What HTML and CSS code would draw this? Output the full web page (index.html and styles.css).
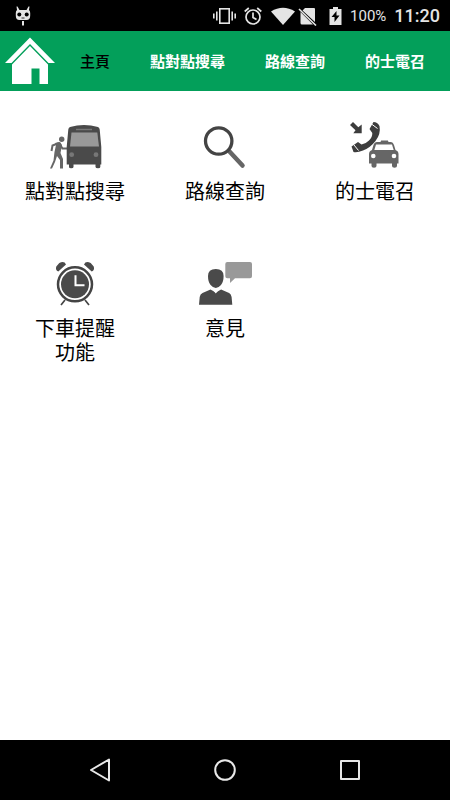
FILE: index.html
```html
<!DOCTYPE html>
<html lang="zh-Hant">
<head>
<meta charset="utf-8">
<meta name="viewport" content="width=device-width, initial-scale=1">
<title>主頁</title>
<link rel="stylesheet" href="styles.css">
</head>
<body>
<div class="status">
  <svg class="status-cat" width="16" height="20" viewBox="0 0 16 20" fill="#e4e4e4"><path d="M1.500.5h1L4.500 4h7l2-3.500h1L14 4q1.200 1 1.200 3v2.500q0 4.500-3.700 4.500h-7Q.8 14 .8 9.500V7q0-2 1.200-3z"/><circle cx="4.300" cy="8.500" r="2" fill="#000"/><circle cx="11.700" cy="8.500" r="2" fill="#000"/><path d="M6.500 12h3" stroke="#000" stroke-width=".8"/><path d="M7 15h2v4.500H7z"/></svg>
  <div class="status-right">
    <svg width="23" height="18" viewBox="0 0 23 18" fill="none" stroke="#e4e4e4" stroke-width="1.600"><rect x="6.800" y="1.800" width="9.400" height="14.400"/><path d="M3.800 4.500v9M.8 6.500v5M19.200 4.500v9M22.200 6.500v5"/></svg>
    <svg width="18" height="18" viewBox="0 0 18 18" fill="none" stroke="#e4e4e4" stroke-width="1.700"><circle cx="9" cy="10" r="7"/><path d="M9 5.500v5l3.500 2M.7 4.500 4.800 1M17.300 4.500 13.200 1"/></svg>
    <svg width="48" height="20" viewBox="0 0 48 20" fill="#e4e4e4"><path d="M1 5.500Q13-2 25 5.500L13 19z"/><path d="M35 2h9q1 0 1 1v13L32.500 4.500zM30.500 6 43 18.500H32q-1.500 0-1.500-1.500z"/><path d="m29 3 17 16.500" stroke="#e4e4e4" stroke-width="1.600"/></svg>
    <svg width="16" height="18" viewBox="0 0 16 18" fill="#e4e4e4"><path d="M7 0h5v2h3.500v16h-12V2H7z"/><path d="M10.500 4 5.500 10h3v5l5-6.500h-3z" fill="#000"/></svg>
    <span class="percent">100%</span>
    <span class="time">11:20</span>
  </div>
</div>
<header class="bar">
  <a class="home" href="#" aria-label="主頁"><svg width="50" height="48" viewBox="0 0 50 48" fill="#fff"><path d="M25 0.500 0 26h6.500L25 7l18.500 19H50z"/><path d="M25 9 7 27.500V47h19.500V31.500h8V47H43V27.500z"/></svg></a>
  <nav class="tabs">
    <a class="tab tab-current" href="#">主頁</a>
    <a class="tab" href="#">點對點搜尋</a>
    <a class="tab" href="#">路線查詢</a>
    <a class="tab" href="#">的士電召</a>
  </nav>
</header>
<main class="menu">
  <a class="item" href="#">
    <svg class="icon" viewBox="0 0 60 60"><circle cx="16.700" cy="24.300" r="2.700" fill="#666"/><path d="m14 28-6.500 2.500L6.500 36M14 28l3.500 5.500h5" fill="none" stroke="#666" stroke-width="2"/><path d="m10 28 5-1 2 3-1.500 8 2.500 6v9.500h-3V45l-3-4-2 6-3 6.500H5l3.500-8L9.500 37l1.500-7z" fill="#666"/><path d="M25 12q14-4 28 0 1.500.5 1.700 2.500L56.300 32v17.500h-1V52q0 1.300-2.300 1.300T50.500 52v-2.500h-22V52q0 1.300-2.300 1.300T24 52v-2.500h-2.300V32l1.600-17.500Q23.500 12.500 25 12z" fill="#4a4a4a"/><path d="M26.500 17.500h25.800L54 31.500H25z" fill="#999"/><path d="M31 14.500h16" stroke="#777" stroke-width="1.500"/><circle cx="26.700" cy="39.700" r="2.400" fill="#777"/><circle cx="51" cy="39.700" r="2.400" fill="#777"/></svg>
    <span class="label">點對點搜尋</span>
  </a>
  <a class="item" href="#">
    <svg class="icon" viewBox="0 0 60 60" fill="none"><path d="m34.500 36.500 13 14" stroke="#666" stroke-width="4.500" stroke-linecap="round"/><circle cx="23.700" cy="26" r="13.200" stroke="#444" stroke-width="3.300"/></svg>
    <span class="label">路線查詢</span>
  </a>
  <a class="item" href="#">
    <svg class="icon" viewBox="0 0 60 60"><path d="M8 7l5.300 5.300 3.400-2.800v8.800H8.300l2.200-3L5 10z" fill="#3d3d3d"/><path d="M28.500 7q4 0 6 4 1.500 8-4 15T18 35.500q-6 2.500-9.500 1.500L6.500 31.500l6.500-4.500 3.500 2.500q4-.5 7.500-4t3.300-7.500L24.500 14z" fill="#3d3d3d"/><path d="m26.500 9 6 4.500M9 30l4.500 5.500" stroke="#fff" stroke-width="1"/><path d="M32 30h-2.500l2.500-3h3.500l.6-1.500h6.800L43.500 27H46q2 0 3 3l1.500 5q3 1 3 4v9.500H52V51q0 1.700-2.500 1.700T47 51v-2.500H31.500V51q0 1.700-2.500 1.700T26.500 51v-2.500H24V39q0-3 3-4l1.500-5q1-3 3.500-3z" fill="#666"/><path d="M31 29.500h16l1.700 5.500H29.300z" fill="#fff"/><circle cx="28.300" cy="41" r="2.300" fill="#fff"/><circle cx="49" cy="41" r="2.300" fill="#fff"/></svg>
    <span class="label">的士電召</span>
  </a>
  <a class="item" href="#">
    <svg class="icon" viewBox="0 0 60 60" fill="none"><path d="M13.300 19.500q-3.300-1.500-2-5l3-3.500q5-2.500 6.700 1.500zM46.700 19.500q3.300-1.500 2-5l-3-3.500q-5-2.500-6.700 1.500z" fill="#4a4a4a"/><path d="m20 48-4 5m24-5 4 5" stroke="#444" stroke-width="1.700"/><circle cx="30" cy="32.300" r="17" fill="#fff" stroke="#444" stroke-width="2.500"/><circle cx="30" cy="32.300" r="14" fill="#4a4a4a"/><path d="M30.500 23.300v10h9" stroke="#fff" stroke-width="2"/></svg>
    <span class="label">下車提醒<wbr>功能</span>
  </a>
  <a class="item" href="#">
    <svg class="icon" viewBox="0 0 60 60"><path d="M32.300 10H55q2 0 2 2v12.300q0 2-2 2H40L35 31v-4.700h-2.700q-2 0-2-2V12q0-2 2-2z" fill="#999"/><ellipse cx="20.800" cy="27" rx="8.800" ry="10.500" fill="#fff"/><path d="M13 24q0-7 7.800-7t7.800 7q0 6-2.600 9t-5.200 3-5.200-3Q13 30 13 24z" fill="#4a4a4a"/><path d="m15.500 37.500 5.300 3 5.300-3 8 3.500q2 1 2.500 4l.7 7.700H4L4.700 45q.5-3 2.800-4z" fill="#4a4a4a"/><path d="m17.500 37.500 3.300 4 3.300-4-3.300 2z" fill="#fff"/></svg>
    <span class="label">意見</span>
  </a>
</main>
<footer class="system">
  <button class="key" type="button" aria-label="返回"><svg width="24" height="24" viewBox="0 0 24 24"><path d="M21 1.500v21L3 12z"/></svg></button>
  <button class="key" type="button" aria-label="主畫面"><svg width="24" height="24" viewBox="0 0 24 24"><circle cx="12" cy="12" r="9.800"/></svg></button>
  <button class="key" type="button" aria-label="最近"><svg width="24" height="24" viewBox="0 0 24 24"><rect x="3" y="3" width="18" height="18"/></svg></button>
</footer>
</body>
</html>
```
FILE: styles.css
```css
* {
  box-sizing: border-box;
}

body {
  margin: 0;
  min-height: 100vh;
  display: flex;
  flex-direction: column;
  background: #fff;
  color: #000;
  font-family: "Noto Sans CJK TC", sans-serif;
}

a {
  color: inherit;
  text-decoration: none;
}

svg {
  display: block;
  flex: none;
}

.status {
  display: flex;
  align-items: center;
  justify-content: space-between;
  height: 31px;
  padding: 0 10px 0 15px;
  background: #000;
  color: #e4e4e4;
  font-family: Roboto, sans-serif;
}

.status-right {
  display: flex;
  align-items: center;
  gap: 8px;
}

.percent {
  font-size: 15px;
}

.time {
  font-size: 18px;
  font-weight: 500;
}

.bar {
  display: flex;
  align-items: center;
  height: 60px;
  padding: 0 5px;
  background: #039f5a;
}

.tabs {
  display: flex;
  flex: 1;
  justify-content: flex-end;
}

.tab {
  padding: 0 20px;
  color: #fff;
  font-size: 15px;
  font-weight: 700;
  line-height: 60px;
  white-space: nowrap;
}

.tab-current {
  color: #000;
  font-weight: 500;
}

.menu {
  flex: 1;
  display: grid;
  grid-template-columns: repeat(3, 1fr);
  align-content: start;
  row-gap: 25px;
  padding-top: 24px;
}

.item {
  display: flex;
  flex-direction: column;
  align-items: center;
  gap: 4px;
}

.icon {
  width: 60px;
  height: 60px;
}

.label {
  width: 110px;
  min-height: 48px;
  font-size: 20px;
  line-height: 24px;
  text-align: center;
  word-break: keep-all;
}

.system {
  display: flex;
  justify-content: center;
  height: 60px;
  background: #000;
}

.key {
  display: flex;
  align-items: center;
  justify-content: center;
  width: 125px;
  padding: 0;
  border: 0;
  background: none;
}

.key svg {
  fill: none;
  stroke: #e8e8e8;
  stroke-width: 2;
  stroke-linejoin: round;
}
```
